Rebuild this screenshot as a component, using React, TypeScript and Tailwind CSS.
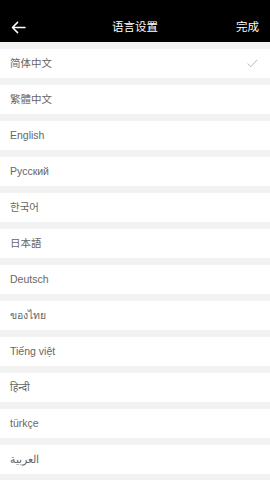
import { useState } from "react";

const LANGS = [
  "简体中文",
  "繁體中文",
  "English",
  "Русский",
  "한국어",
  "日本語",
  "Deutsch",
  "ของไทย",
  "Tiếng việt",
  "हिन्दी",
  "türkçe",
  "العربية",
];

export default function App() {
  const [selected, setSelected] = useState(0);

  return (
    <div
      className="w-[270px] h-[480px] overflow-hidden bg-[#f2f2f2]"
      style={{ fontFamily: '"Liberation Sans", "Noto Sans", "Noto Sans CJK SC", sans-serif' }}
    >
      {/* Header */}
      <div className="h-[42px] bg-black flex items-end pb-[5px] px-[8px]">
        <button className="w-[20px] h-[20px] flex items-center justify-center">
          <svg width="15" height="13" viewBox="0 0 16 14" fill="none" stroke="white" strokeWidth="1.6" strokeLinecap="round" strokeLinejoin="round">
            <path d="M15 7H1.5M7 1.5L1.5 7 7 12.5" />
          </svg>
        </button>
        <div className="flex-1 text-center text-white text-[11.5px] leading-[20px] pl-[6px]">语言设置</div>
        <button className="text-white text-[11.5px] leading-[20px] pr-[3px]">完成</button>
      </div>

      {/* List */}
      <div className="flex flex-col gap-[7px] pt-[7px]">
        {LANGS.map((l, i) => (
          <div
            key={l}
            onClick={() => setSelected(i)}
            className="h-[29px] bg-white flex items-center px-[10px] text-[10.5px] text-[#666666]"
          >
            <span className="flex-1">{l}</span>
            {selected === i && (
              <svg width="11" height="9" viewBox="0 0 11 9" fill="none" stroke="#b8b8b8" strokeWidth="1" strokeLinecap="round" strokeLinejoin="round" className="mr-[2px]">
                <path d="M1 4.8L3.8 7.8 10 1" />
              </svg>
            )}
          </div>
        ))}
      </div>
    </div>
  );
}
